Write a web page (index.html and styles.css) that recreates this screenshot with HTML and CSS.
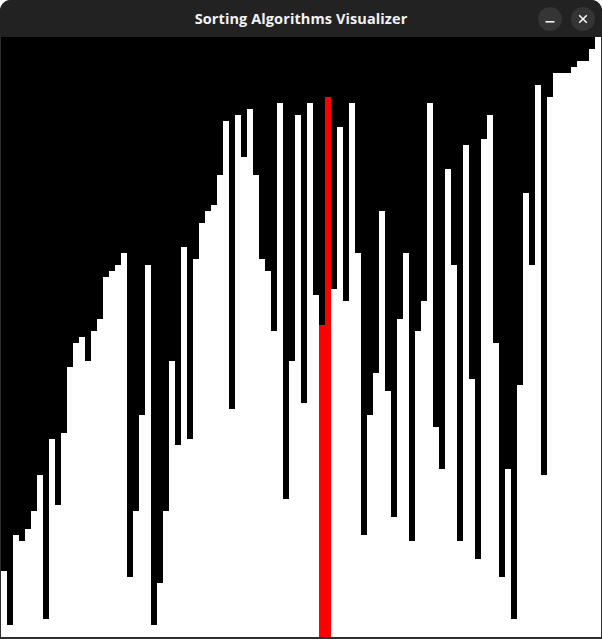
FILE: index.html
```html
<!DOCTYPE html>
<html>
<head>
<meta charset="utf-8">
<title>Sorting Algorithms Visualizer</title>
<link rel="stylesheet" href="styles.css">
</head>
<body>
<div class="window">
  <div class="titlebar">
    <div class="title">Sorting Algorithms Visualizer</div>
    <div class="controls">
      <div class="btn"><svg width="24" height="24" viewBox="0 0 24 24"><rect x="7.5" y="14" width="9" height="1.6" fill="#f2f2f2"/></svg></div>
      <div class="btn"><svg width="24" height="24" viewBox="0 0 24 24"><path d="M8.2 8.2 L15.8 15.8 M15.8 8.2 L8.2 15.8" stroke="#f2f2f2" stroke-width="1.6" fill="none"/></svg></div>
    </div>
  </div>
  <div class="canvas">
    <div class="bar" style="height:66px"></div>
    <div class="bar" style="height:12px"></div>
    <div class="bar" style="height:102px"></div>
    <div class="bar" style="height:96px"></div>
    <div class="bar" style="height:108px"></div>
    <div class="bar" style="height:126px"></div>
    <div class="bar" style="height:162px"></div>
    <div class="bar" style="height:18px"></div>
    <div class="bar" style="height:198px"></div>
    <div class="bar" style="height:132px"></div>
    <div class="bar" style="height:204px"></div>
    <div class="bar" style="height:270px"></div>
    <div class="bar" style="height:294px"></div>
    <div class="bar" style="height:300px"></div>
    <div class="bar" style="height:276px"></div>
    <div class="bar" style="height:306px"></div>
    <div class="bar" style="height:318px"></div>
    <div class="bar" style="height:360px"></div>
    <div class="bar" style="height:366px"></div>
    <div class="bar" style="height:372px"></div>
    <div class="bar" style="height:384px"></div>
    <div class="bar" style="height:60px"></div>
    <div class="bar" style="height:126px"></div>
    <div class="bar" style="height:222px"></div>
    <div class="bar" style="height:372px"></div>
    <div class="bar" style="height:12px"></div>
    <div class="bar" style="height:54px"></div>
    <div class="bar" style="height:126px"></div>
    <div class="bar" style="height:276px"></div>
    <div class="bar" style="height:192px"></div>
    <div class="bar" style="height:390px"></div>
    <div class="bar" style="height:198px"></div>
    <div class="bar" style="height:378px"></div>
    <div class="bar" style="height:414px"></div>
    <div class="bar" style="height:426px"></div>
    <div class="bar" style="height:432px"></div>
    <div class="bar" style="height:462px"></div>
    <div class="bar" style="height:516px"></div>
    <div class="bar" style="height:228px"></div>
    <div class="bar" style="height:522px"></div>
    <div class="bar" style="height:480px"></div>
    <div class="bar" style="height:528px"></div>
    <div class="bar" style="height:462px"></div>
    <div class="bar" style="height:378px"></div>
    <div class="bar" style="height:366px"></div>
    <div class="bar" style="height:306px"></div>
    <div class="bar" style="height:534px"></div>
    <div class="bar" style="height:138px"></div>
    <div class="bar" style="height:276px"></div>
    <div class="bar" style="height:522px"></div>
    <div class="bar" style="height:234px"></div>
    <div class="bar" style="height:534px"></div>
    <div class="bar" style="height:342px"></div>
    <div class="bar active" style="height:312px"></div>
    <div class="bar active" style="height:540px"></div>
    <div class="bar" style="height:348px"></div>
    <div class="bar" style="height:510px"></div>
    <div class="bar" style="height:336px"></div>
    <div class="bar" style="height:534px"></div>
    <div class="bar" style="height:384px"></div>
    <div class="bar" style="height:102px"></div>
    <div class="bar" style="height:222px"></div>
    <div class="bar" style="height:264px"></div>
    <div class="bar" style="height:426px"></div>
    <div class="bar" style="height:246px"></div>
    <div class="bar" style="height:120px"></div>
    <div class="bar" style="height:318px"></div>
    <div class="bar" style="height:384px"></div>
    <div class="bar" style="height:96px"></div>
    <div class="bar" style="height:306px"></div>
    <div class="bar" style="height:336px"></div>
    <div class="bar" style="height:534px"></div>
    <div class="bar" style="height:210px"></div>
    <div class="bar" style="height:168px"></div>
    <div class="bar" style="height:468px"></div>
    <div class="bar" style="height:372px"></div>
    <div class="bar" style="height:96px"></div>
    <div class="bar" style="height:492px"></div>
    <div class="bar" style="height:258px"></div>
    <div class="bar" style="height:78px"></div>
    <div class="bar" style="height:498px"></div>
    <div class="bar" style="height:522px"></div>
    <div class="bar" style="height:294px"></div>
    <div class="bar" style="height:60px"></div>
    <div class="bar" style="height:168px"></div>
    <div class="bar" style="height:18px"></div>
    <div class="bar" style="height:252px"></div>
    <div class="bar" style="height:444px"></div>
    <div class="bar" style="height:372px"></div>
    <div class="bar" style="height:552px"></div>
    <div class="bar" style="height:162px"></div>
    <div class="bar" style="height:540px"></div>
    <div class="bar" style="height:564px"></div>
    <div class="bar" style="height:564px"></div>
    <div class="bar" style="height:564px"></div>
    <div class="bar" style="height:570px"></div>
    <div class="bar" style="height:576px"></div>
    <div class="bar" style="height:576px"></div>
    <div class="bar" style="height:588px"></div>
    <div class="bar" style="height:600px"></div>
  </div>
</div>
</body>
</html>
```

FILE: styles.css
```css
html, body {
  margin: 0;
  padding: 0;
  background: #ffffff;
}

.window {
  width: 602px;
  height: 639px;
  background: #2e2e2e;
  border-radius: 11px 11px 0 0;
  overflow: hidden;
  display: flex;
  flex-direction: column;
}

.titlebar {
  position: relative;
  height: 37px;
  background: #222222;
  display: flex;
  align-items: center;
  justify-content: center;
  flex: none;
}

.title {
  font-family: "Open Sans", "DejaVu Sans", sans-serif;
  font-weight: 700;
  font-size: 14.5px;
  color: #f2f2f2;
  letter-spacing: 0.1px;
  margin-top: -1px;
}

.controls {
  position: absolute;
  right: 7px;
  top: 7px;
  display: flex;
  gap: 9px;
}

.btn {
  width: 24px;
  height: 24px;
  border-radius: 50%;
  background: #353535;
  display: flex;
  align-items: center;
  justify-content: center;
}

.btn svg {
  display: block;
}

.canvas {
  height: 600px;
  margin: 0 1px 2px 1px;
  background: #000000;
  display: flex;
  align-items: flex-end;
}

.bar {
  width: 6px;
  flex: none;
  background: #ffffff;
}

.bar.active {
  background: #ff0000;
}
```
